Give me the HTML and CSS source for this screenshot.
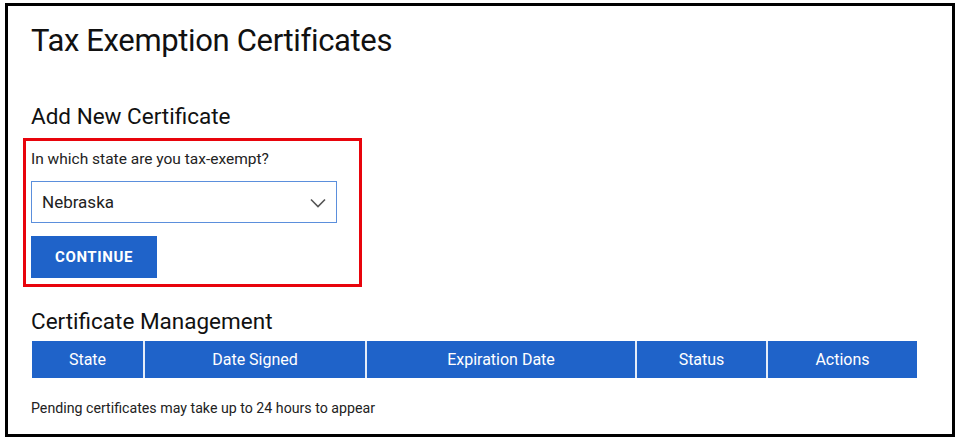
FILE: index.html
```html
<!DOCTYPE html>
<html lang="en">
<head>
  <meta charset="UTF-8">
  <meta name="viewport" content="width=device-width, initial-scale=1.0">
  <title>Tax Exemption Certificates</title>

  <link rel="stylesheet" href="styles.css">

</head>
<body>

  <div id="page">
    <h1>Tax Exemption Certificates</h1>

    <h2 class="add-title">Add New Certificate</h2>
    <div class="add-form">
      <label for="state">In which state are you tax-exempt?</label>
      <div class="select-wrap">
        <select id="state">
          <option>Nebraska</option>
        </select>
        <svg class="chevron" width="16" height="10" viewBox="0 0 16 10">
          <path d="M1 1.5 L8 8.5 L15 1.5" fill="none" stroke="#555" stroke-width="1.6"/>
        </svg>
      </div>
      <button class="continue">CONTINUE</button>
    </div>

    <h2 class="manage-title">Certificate Management</h2>
    <table class="certs">
      <thead>
        <tr>
          <th class="col-state">State</th>
          <th class="col-signed">Date Signed</th>
          <th class="col-exp">Expiration Date</th>
          <th class="col-status">Status</th>
          <th class="col-actions">Actions</th>
        </tr>
      </thead>
    </table>

    <p class="note">Pending certificates may take up to 24 hours to appear</p>
  </div>

</body>
</html>
```

FILE: styles.css
```css
* {
  margin: 0;
  padding: 0;
  box-sizing: border-box;
}

body {
  background: #fff;
  font-family: Roboto, "Liberation Sans", sans-serif;
  color: #222;
}

#page {
  margin: 3px 0 0 5px;
  width: 950px;
  height: 434px;
  border: 3px solid #000;
  padding: 0 15px;
}

#page h1 {
  font-weight: 400;
  font-size: 31px;
  letter-spacing: -0.35px;
  line-height: 36px;
  margin: 17px 0 0 8px;
  color: #111;
}

#page h2 {
  font-weight: 400;
  font-size: 22.5px;
  line-height: 28px;
  color: #111;
  margin-left: 8px;
}

.add-title {
  margin-top: 43px;
}

.add-form {
  width: 339px;
  height: 149px;
  margin-top: 8px;
  border: 3px solid #e8040c;
  padding: 9px 5px 0;
}

.add-form label {
  display: block;
  font-size: 15.5px;
  line-height: 18px;
}

.select-wrap {
  position: relative;
  width: 306px;
  margin-top: 13px;
}

.select-wrap select {
  appearance: none;
  width: 100%;
  height: 42px;
  border: 1px solid #5b8fdc;
  border-radius: 0;
  background: #fff;
  font-family: Roboto, "Liberation Sans", sans-serif;
  font-size: 17px;
  color: #222;
  padding: 0 10px;
}

.select-wrap .chevron {
  position: absolute;
  right: 11px;
  top: 17px;
}

.continue {
  display: block;
  margin-top: 13px;
  width: 126px;
  height: 42px;
  border: none;
  background: #1f63c9;
  color: #fff;
  font-family: Roboto, "Liberation Sans", sans-serif;
  font-weight: 700;
  font-size: 15px;
  letter-spacing: 0.6px;
  cursor: pointer;
}

.manage-title {
  margin-top: 20px;
}

.certs {
  margin: 6px 0 0 9px;
  width: 885px;
  border-collapse: collapse;
  table-layout: fixed;
}

.certs th {
  height: 37px;
  background: #1f63c9;
  color: #fff;
  font-weight: 400;
  font-size: 16px;
  border-left: 2px solid #e4ecf8;
}

.certs th:first-child {
  border-left: none;
}

.col-state { width: 112px; }
.col-signed { width: 222px; }
.col-exp { width: 270px; }
.col-status { width: 131px; }
.col-actions { width: 150px; }

.note {
  margin: 21px 0 0 8px;
  font-size: 14.2px;
  line-height: 18px;
}
```
